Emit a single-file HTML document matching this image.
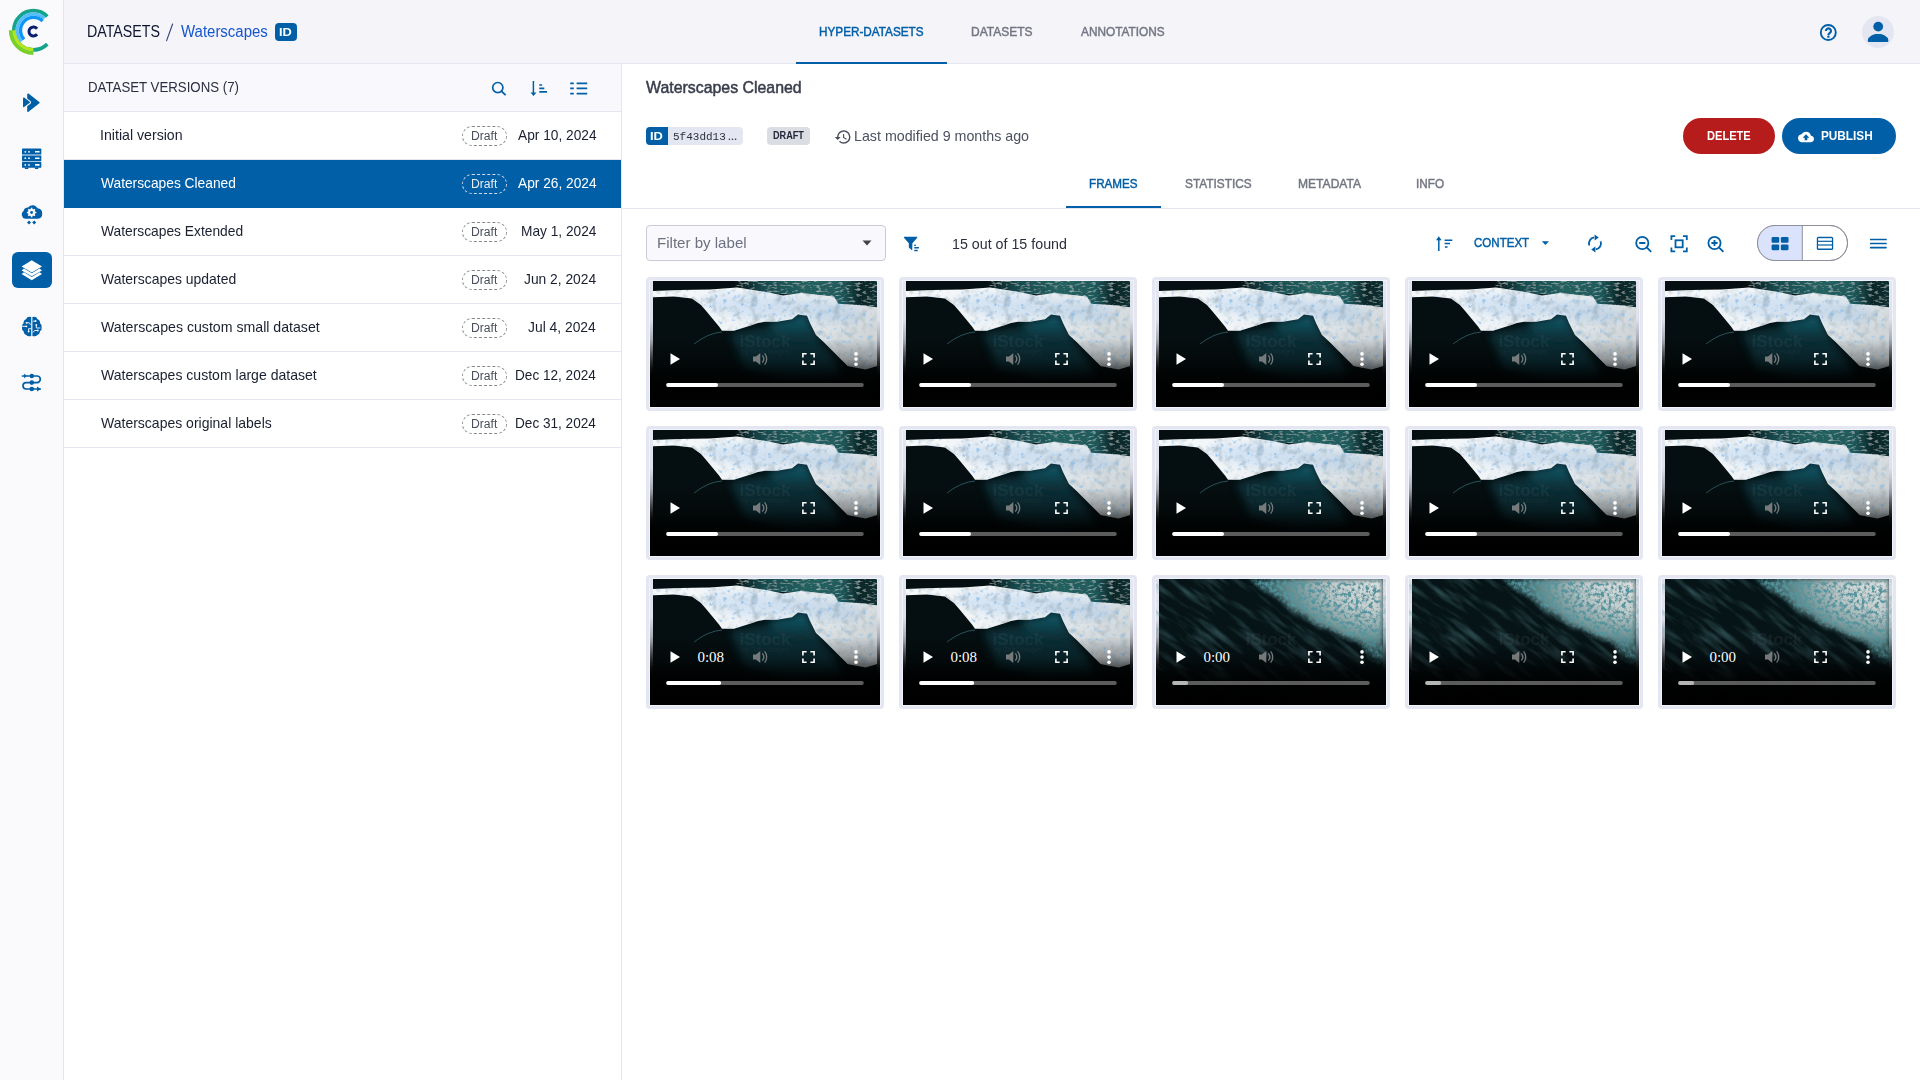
<!DOCTYPE html>
<html><head><meta charset="utf-8"><style>
*{box-sizing:border-box;margin:0;padding:0}
html,body{width:1920px;height:1080px;overflow:hidden;background:#fff;font-family:"Liberation Sans",sans-serif;color:#23273a}
.abs{position:absolute}
.t{position:absolute;white-space:nowrap}
#side{position:absolute;left:0;top:0;width:64px;height:1080px;background:#fafafd;border-right:1px solid #e3e6ef}
#hdr{position:absolute;left:64px;top:0;width:1856px;height:64px;background:#f4f4f9;border-bottom:1px solid #e3e6ef}
#left{position:absolute;left:64px;top:64px;width:558px;height:1016px;background:#fff;border-right:1px solid #e3e6ef}
#vh{position:absolute;left:64px;top:64px;width:557px;height:48px;background:#f9f9fd;border-bottom:1px solid #e3e6ef}
.row{position:absolute;left:64px;width:557px;height:48px;border-bottom:1px solid #e3e6ef}
.row.sel{background:#005fa7;border-bottom-color:#005fa7}
.draft{position:absolute;left:398px;top:14px;width:45px;height:20px;border:1px dashed #85888f;border-radius:10px}
.sel .draft{border-color:#d5dcea}
.card{position:absolute;width:238px;height:134px;background:#e4e7f1;border-radius:4px}
.vid{position:absolute;left:4px;top:4px;width:230px;height:126px;box-shadow:0 0 0 1px #f1f3fb}
.vid svg{position:absolute;left:0;top:0}
</style></head><body>
<svg width="0" height="0" style="position:absolute">
<defs>
<linearGradient id="ctl" x1="0" y1="0" x2="0" y2="1">
<stop offset="0" stop-color="#000" stop-opacity="0"/>
<stop offset="0.46" stop-color="#000" stop-opacity="0"/>
<stop offset="0.62" stop-color="#000" stop-opacity="0.3"/>
<stop offset="0.74" stop-color="#000" stop-opacity="0.75"/>
<stop offset="0.84" stop-color="#000" stop-opacity="0.97"/>
<stop offset="1" stop-color="#000" stop-opacity="1"/>
</linearGradient>
<linearGradient id="side" x1="0" y1="0" x2="0" y2="1">
<stop offset="0" stop-color="#e4e7f1"/>
<stop offset="0.3" stop-color="#dfe2eb"/>
<stop offset="0.5" stop-color="#9c9ea6"/>
<stop offset="0.7" stop-color="#202022"/>
<stop offset="0.8" stop-color="#000"/>
<stop offset="1" stop-color="#000"/>
</linearGradient>
<linearGradient id="foamg" x1="0" y1="0" x2="1" y2="0.5">
<stop offset="0" stop-color="#f8fafa"/>
<stop offset="0.45" stop-color="#f0f4f7"/>
<stop offset="0.75" stop-color="#e2e8eb"/>
<stop offset="1" stop-color="#d0d6d8"/>
</linearGradient>
<radialGradient id="deep" cx="0.5" cy="0.45" r="0.5">
<stop offset="0" stop-color="#0a2b32"/>
<stop offset="0.55" stop-color="#061c21"/>
<stop offset="1" stop-color="#030c0d"/>
</radialGradient>
<linearGradient id="topw" x1="0" y1="0" x2="1" y2="0">
<stop offset="0" stop-color="#061416"/>
<stop offset="0.2" stop-color="#174a4e"/>
<stop offset="0.5" stop-color="#22605f"/>
<stop offset="0.75" stop-color="#1f5a5c"/>
<stop offset="0.88" stop-color="#0a2729"/>
<stop offset="1" stop-color="#0e2f31"/>
</linearGradient>
<radialGradient id="w2g" cx="0.95" cy="0.05" r="1.1">
<stop offset="0" stop-color="#dfe3e2"/>
<stop offset="0.22" stop-color="#c3cccb"/>
<stop offset="0.38" stop-color="#4e8186"/>
<stop offset="0.55" stop-color="#123c43"/>
<stop offset="0.8" stop-color="#08191c"/>
<stop offset="1" stop-color="#040b0c"/>
</radialGradient>
<filter id="tex" x="0" y="0" width="100%" height="100%">
<feTurbulence type="fractalNoise" baseFrequency="0.22" numOctaves="3" seed="3" result="n"/>
<feColorMatrix in="n" type="matrix" values="0 0 0 0 0.26  0 0 0 0 0.54  0 0 0 0 0.84  0 0 0 -3.2 1.3" result="c"/>
<feComposite in="c" in2="SourceGraphic" operator="in" result="spots"/>
<feTurbulence type="fractalNoise" baseFrequency="0.12" numOctaves="2" seed="9" result="n2"/>
<feColorMatrix in="n2" type="matrix" values="0 0 0 0 0.42  0 0 0 0 0.50  0 0 0 0 0.54  0 0 0 2.4 -1.15" result="c2"/>
<feComposite in="c2" in2="SourceGraphic" operator="in" result="shade"/>
<feMerge><feMergeNode in="SourceGraphic"/><feMergeNode in="shade"/><feMergeNode in="spots"/></feMerge>
</filter>
<filter id="tex2" x="0" y="0" width="100%" height="100%">
<feTurbulence type="fractalNoise" baseFrequency="0.18 0.5" numOctaves="2" seed="7" result="n"/>
<feColorMatrix in="n" type="matrix" values="0 0 0 0 0.62  0 0 0 0 0.80  0 0 0 0 0.80  0 0 0 1.3 -0.68" result="c"/>
<feComposite in="c" in2="SourceGraphic" operator="in" result="spots"/>
<feMerge><feMergeNode in="SourceGraphic"/><feMergeNode in="spots"/></feMerge>
</filter>
<filter id="streak" x="0" y="0" width="100%" height="100%">
<feTurbulence type="fractalNoise" baseFrequency="0.025 0.14" numOctaves="3" seed="5" result="n"/>
<feColorMatrix in="n" type="matrix" values="0 0 0 0 0.10  0 0 0 0 0.26  0 0 0 0 0.29  0 0 0 1.1 -0.52" result="c"/>
<feComposite in="c" in2="SourceGraphic" operator="in"/>
</filter>
<filter id="bl1"><feGaussianBlur stdDeviation="4"/></filter>
<clipPath id="imgclip"><rect x="3" y="0" width="224" height="126"/></clipPath>
<linearGradient id="lipg" x1="0" y1="0" x2="0" y2="1">
<stop offset="0" stop-color="#176070"/>
<stop offset="1" stop-color="#07252b"/>
</linearGradient>
<symbol id="w1" viewBox="0 0 230 126">
<rect x="0" y="0" width="230" height="126" fill="url(#side)"/>
<g clip-path="url(#imgclip)">
<rect x="3" y="0" width="224" height="126" fill="#050e10"/>
<path d="M85 0 L227 0 L227 30 L190 24 L150 14 L110 12 L85 8Z" fill="url(#topw)" filter="url(#tex2)"/>
<path d="M80 52 L150 40 L165 52 L182 75 L192 96 L140 100 L95 88Z" fill="#0c3a45" opacity="0.75" filter="url(#bl1)"/>
<path d="M118 42 L142 38 L150 33 L158 36 L162 46 L168 58 L150 62 L128 56Z" fill="url(#lipg)" filter="url(#bl1)"/>
<path d="M3 10 L30 9 L60 8.4 L87 6.6 L115 10.8 L133 14.4 L151 12 L184 15.6 L188 22.8 L208 24 L227 26.3 L227 85 L215.6 88.5 L197.6 85 L185.6 73 L173.6 61 L166 54 L160 42 L157 34.7 L148 33.5 L142 38.3 L127 40.7 L115 40.7 L108 42 L96 46 L84 49.7 L72 49.7 L69 45.5 L63 38.3 L57 31 L51 24 L42 17.4 L24 15.6 L3 16.2Z" fill="url(#foamg)" filter="url(#tex)"/>
<path d="M50 16 L100 13 L140 17 L185 22 L215 30 L200 42 L165 40 L150 33 L120 36 L90 36 L62 28Z" fill="#2f7fd6" opacity="0.14" filter="url(#bl1)"/>
<path d="M44 63 Q58 52 72 51" stroke="#3e7f8a" stroke-width="1" fill="none" opacity="0.6"/>
<text x="115" y="66" text-anchor="middle" font-family="Liberation Sans" font-weight="700" font-size="17" fill="#9a9a9a" opacity="0.09">iStock</text><text x="115" y="73" text-anchor="middle" font-family="Liberation Sans" font-size="6.5" fill="#9a9a9a" opacity="0.1">by Getty Images</text>
</g>
<rect x="0" y="0" width="230" height="126" fill="url(#ctl)"/>
</symbol>
<radialGradient id="f2g" cx="1" cy="0" r="1">
<stop offset="0" stop-color="#e2e6e5"/>
<stop offset="0.4" stop-color="#c2cccc"/>
<stop offset="0.75" stop-color="#5d8587"/>
<stop offset="1" stop-color="#183f45"/>
</radialGradient>
<filter id="tex3" x="-10%" y="-10%" width="120%" height="120%">
<feGaussianBlur in="SourceGraphic" stdDeviation="2.5" result="b"/>
<feTurbulence type="fractalNoise" baseFrequency="0.28" numOctaves="3" seed="11" result="n"/>
<feColorMatrix in="n" type="matrix" values="0 0 0 0 0.09  0 0 0 0 0.30  0 0 0 0 0.34  0 0 0 -4 2.35" result="c"/>
<feComposite in="c" in2="b" operator="in" result="spots"/>
<feMerge><feMergeNode in="b"/><feMergeNode in="spots"/></feMerge>
</filter>
<symbol id="w2" viewBox="0 0 230 126">
<rect x="0" y="0" width="230" height="126" fill="url(#side)"/>
<g transform="translate(3,0)">
<rect x="0" y="0" width="224" height="126" fill="#061417"/>
<g transform="rotate(38 112 63)"><rect x="-60" y="-60" width="344" height="246" fill="#1b4f55" filter="url(#streak)"/></g>
<path d="M92 0 L224 0 L224 84 L212 78 L200 62 L186 58 L172 50 L158 46 L146 36 L132 30 L120 18 L104 10Z" fill="url(#f2g)" filter="url(#tex3)"/>
<text x="112" y="66" text-anchor="middle" font-family="Liberation Sans" font-weight="700" font-size="17" fill="#9a9a9a" opacity="0.09">iStock</text>
</g>
<rect x="0" y="0" width="230" height="126" fill="url(#ctl)"/>
</symbol>
</defs></svg>
<div id="side"></div>
<svg class="abs" width="64" height="64" viewBox="0 0 64 64" style="left:0;top:0">
<path d="M47.26 44.16A19.6 19.6 0 1 1 47.26 16.44" stroke="#14a38b" stroke-width="3.7" fill="none"/>
<path d="M21.55 41.35A16.2 16.2 0 0 1 44.45 18.45" stroke="#55bdfb" stroke-width="3.2" fill="none"/>
<path d="M24.05 39.33A13.0 13.0 0 0 1 42.59 21.11" stroke="#0d96f5" stroke-width="3.4" fill="none"/>
<path d="M33.40 49.80A19.5 19.5 0 0 1 13.90 30.30" stroke="#b5e51d" stroke-width="3.5" fill="none"/>
<path d="M33.40 53.20A22.9 22.9 0 0 1 10.50 30.30" stroke="#78d12a" stroke-width="3.4" fill="none"/>
<path d="M37.05 34.27A4.5 4.5 0 1 1 37.05 28.73" stroke="#0b1e6e" stroke-width="3" fill="none"/>
</svg>
<svg class="abs" style="left:0;top:0" width="64" height="420" viewBox="0 0 64 420">
<g fill="#005fa7" stroke-linejoin="round">
<path d="M28 94.2 L38.8 102.7 L28 111.2Z" stroke="#005fa7" stroke-width="1.6"/>
<path d="M23.7 98.1 L29.4 102.35 L23.7 106.6Z" stroke="#fafafd" stroke-width="3.4"/>
<path d="M23.7 98.1 L29.4 102.35 L23.7 106.6Z" stroke="#005fa7" stroke-width="1.3"/>
</g>
<g fill="#005fa7">
<rect x="22" y="148.6" width="19.3" height="5.4" rx="0.6"/>
<rect x="22" y="155.7" width="19.3" height="5.2" rx="0.6"/>
<rect x="22" y="162" width="19.3" height="5.8" rx="0.6"/>
<rect x="24.8" y="167.6" width="3.6" height="1.4" rx="0.6"/><rect x="34.8" y="167.6" width="3.6" height="1.4" rx="0.6"/>
<rect x="22" y="154" width="19.3" height="1.7" opacity="0.55"/>
<rect x="22" y="160.9" width="19.3" height="1.1" opacity="0.3"/>
</g>
<g fill="#fff"><circle cx="25.3" cy="151.8" r="0.9"/><circle cx="29" cy="151.8" r="0.9"/><rect x="35" y="151" width="4.6" height="1.6" rx="0.5"/>
<circle cx="25.3" cy="158.2" r="0.9"/><circle cx="29" cy="158.2" r="0.9"/><rect x="35" y="157.4" width="4.6" height="1.6" rx="0.5"/>
<circle cx="25.3" cy="164.9" r="0.9"/><circle cx="29" cy="164.9" r="0.9"/><rect x="35" y="164.1" width="4.6" height="1.6" rx="0.5"/></g>
<g fill="#005fa7">
<path d="M25.2 218.8 A4.4 4.4 0 0 1 23.7 210.8 A3.8 3.8 0 0 1 28.2 207.6 A5.4 5.4 0 0 1 37.5 208.3 A5.3 5.3 0 0 1 37.8 218.8 Z"/>
<path d="M29 220.4 L31 222.5 L29 224.6 L27 222.5Z M34.2 220.4 L36.2 222.5 L34.2 224.6 L32.2 222.5Z"/>
</g>
<g fill="#fafafd"><circle cx="31.6" cy="212.5" r="3.6"/></g>
<g stroke="#fafafd" stroke-width="1.6"><path d="M31.6 207.8v9.4M26.9 212.5h9.4M28.3 209.2l6.6 6.6M34.9 209.2l-6.6 6.6"/></g>
<circle cx="31.6" cy="212.5" r="1.4" fill="#005fa7"/>
<rect x="12" y="252" width="40" height="36" rx="6" fill="#005fa7"/>
<g fill="#fff">
<path d="M31.8 260.3 L42 266.6 L31.8 272.5 L21.6 266.6 Z"/>
<path d="M24 268.4 L31.8 273.2 L39.6 268.4 L42 270.4 L31.8 276.2 L21.6 270.4 Z"/>
<path d="M24 272.2 L31.8 277 L39.6 272.2 L42 274 L31.8 280.2 L21.6 274 Z"/>
</g>
<g fill="#005fa7">
<path d="M31.2 317 Q27 316 26.3 319 Q23.5 320 23.5 323.2 Q21.5 324.5 22 327.5 Q21.5 330 23.5 331 Q24 334.6 26.3 335 Q27.5 336.8 31.2 336 Z"/>
<path d="M32.4 317 Q36.6 316 37.3 319 Q40.1 320 40.1 323.2 Q42.1 324.5 41.6 327.5 Q42.1 330 40.1 331 Q39.6 334.6 37.3 335 Q36.1 336.8 32.4 336 Z"/>
</g>
<g stroke="#fafafd" stroke-width="0.9" fill="none"><path d="M21.5 326.3h4.5M26.5 322.8h2.8l1.3 2M28.6 331.5v-2.8h2.5M33 321.2h2.5M36.3 325v3h4M33 332.5l1.5-2h3.5"/></g>
<g fill="#fafafd"><circle cx="26.5" cy="322.8" r="0.9"/><circle cx="26.4" cy="326.3" r="0.9"/><circle cx="28.6" cy="331.5" r="0.9"/><circle cx="35.6" cy="321" r="0.9"/><circle cx="36.3" cy="325" r="0.9"/><circle cx="37.8" cy="330.5" r="0.9"/></g>
<g stroke="#005fa7" stroke-width="1.7" fill="none" stroke-linecap="round"><path d="M22.5 376h14.5a3.3 3.3 0 0 1 0 6.6h-10.8a3.2 3.2 0 0 0 0 6.4h14"/></g>
<g fill="#005fa7"><path d="M24.2 373.4l2.6 2.6-2.6 2.6M37 386.4l3.8 2.6-3.8 2.6"/><circle cx="31.8" cy="376" r="2.2"/><circle cx="31.8" cy="382.6" r="2.3"/><circle cx="31.8" cy="389" r="2.3"/></g>
</svg>
<div id="hdr"></div>
<svg class="abs" style="left:164px;top:20px" width="12" height="24" viewBox="164 20 12 24"><path d="M166.6 40.6 L172.6 24" stroke="#34467e" stroke-width="1.15" stroke-linecap="round"/></svg>
<div class="abs" style="left:275px;top:23px;width:22px;height:18px;background:#005fa7;border-radius:4px"></div>
<div class="abs" style="left:796px;top:62px;width:151px;height:2px;background:#005fa7"></div>
<svg class="abs" style="left:1804px;top:0" width="116" height="64" viewBox="1804 0 116 64">
<circle cx="1828.3" cy="32.5" r="7.5" stroke="#005fa7" stroke-width="1.9" fill="none"/>
<path d="M1825.9 30.9a2.55 2.45 0 1 1 4 2c-.9.6-1.5 1-1.5 2" stroke="#005fa7" stroke-width="2.1" fill="none"/>
<rect x="1827.3" y="35.6" width="2.2" height="2.1" rx="0.3" fill="#005fa7"/>
<circle cx="1878" cy="32" r="16" fill="#e4e7f1"/>
<circle cx="1878.2" cy="26.6" r="4.9" fill="#005fa7"/>
<path d="M1868.6 41.9 Q1867.6 41.9 1867.8 40.2 Q1868.4 37 1871.5 35.4 Q1874 34.1 1875.5 34 L1880.7 34 Q1882.2 34.1 1884.7 35.4 Q1887.8 37 1888.4 40.2 Q1888.6 41.9 1887.6 41.9Z" fill="#005fa7"/>
</svg>
<div id="left"></div>
<div id="vh"></div>
<svg class="abs" style="left:64px;top:64px" width="557" height="48" viewBox="64 64 557 48">
<circle cx="497.8" cy="87.6" r="5.1" stroke="#005fa7" stroke-width="1.7" fill="none"/>
<path d="M501.6 91.4l4 3.8" stroke="#005fa7" stroke-width="1.8"/>
<path d="M533.4 81v13" stroke="#005fa7" stroke-width="1.5"/>
<path d="M530.5 92.4h6l-3 3.6z" fill="#005fa7"/>
<path d="M539.3 85h2.8M539.3 88.4h5M539.3 91.9h7.7" stroke="#005fa7" stroke-width="1.6"/>
<path d="M570.2 83.4h3.6M576.6 83.4h10.6M570.2 88.4h3.6M576.6 88.4h10.6M570.2 93.6h3.6M576.6 93.6h10.6" stroke="#005fa7" stroke-width="1.7"/>
</svg>
<div class="row" style="top:112px"><div class="draft"></div></div><div class="row sel" style="top:160px"><div class="draft"></div></div><div class="row" style="top:208px"><div class="draft"></div></div><div class="row" style="top:256px"><div class="draft"></div></div><div class="row" style="top:304px"><div class="draft"></div></div><div class="row" style="top:352px"><div class="draft"></div></div><div class="row" style="top:400px"><div class="draft"></div></div>
<div class="abs" style="left:646px;top:127px;width:97px;height:18px;background:#e4e7f1;border-radius:4px;overflow:hidden"><div class="abs" style="left:0;top:0;width:22px;height:18px;background:#005fa7"></div></div>
<div class="abs" style="left:767px;top:127px;width:43px;height:18px;background:#dcdde3;border-radius:4px"></div>
<svg class="abs" style="left:834px;top:128px" width="18" height="18" viewBox="0 0 24 24"><path fill="#4a4e5c" d="M13 3a9 9 0 0 0-9 9H1l3.89 3.89.07.14L9 12H6c0-3.870 3.13-7 7-7s7 3.13 7 7-3.13 7-7 7c-1.93 0-3.68-.79-4.94-2.06l-1.42 1.42A8.950 8.950 0 0 0 13 21a9 9 0 0 0 0-18zm-1 5v5l4.280 2.540.72-1.210-3.5-2.080V8H12z"/></svg>
<div class="abs" style="left:1683px;top:118px;width:92px;height:36px;background:#b71c1c;border-radius:18px"></div>
<div class="abs" style="left:1782px;top:118px;width:114px;height:36px;background:#005fa7;border-radius:18px"></div>
<svg class="abs" style="left:1797.5px;top:128.5px" width="16" height="16" viewBox="0 0 24 24"><path fill="#fff" d="M19.35 10.04A7.49 7.49 0 0 0 12 4C9.11 4 6.6 5.64 5.35 8.04A5.994 5.994 0 0 0 0 14c0 3.31 2.69 6 6 6h13c2.76 0 5-2.24 5-5 0-2.64-2.05-4.78-4.65-4.96zM14 13v4h-4v-4H7l5-5 5 5h-3z"/></svg>
<div class="abs" style="left:1066px;top:206px;width:95px;height:2px;background:#005fa7"></div>
<div class="abs" style="left:622px;top:208px;width:1298px;height:1px;background:#e3e6ef"></div>
<div class="abs" style="left:646px;top:225px;width:240px;height:36px;border:1px solid #c9cbd4;border-radius:4px;background:#f9f9fd"></div>
<svg class="abs" style="left:862px;top:240px" width="10" height="6"><path d="M0.5 0.5h9l-4.5 5z" fill="#444"/></svg>
<svg class="abs" style="left:900px;top:232px" width="24" height="22" viewBox="900 232 24 22"><path d="M904.4 236.8 L916.8 236.8 Q917.8 236.9 917.2 237.8 L912.4 243.3 L912.2 250.4 L908.8 247.4 L908.8 243.3 L904 237.8 Q903.5 236.9 904.4 236.8Z" fill="#005fa7"/><rect x="914.2" y="244.6" width="1.7" height="1.5" rx="0.6" fill="#005fa7"/><rect x="914.2" y="247.1" width="4.9" height="1.5" rx="0.6" fill="#005fa7"/><rect x="914.2" y="249.8" width="3.6" height="1.5" rx="0.6" fill="#005fa7"/></svg>
<svg class="abs" style="left:1432px;top:224px" width="488" height="40" viewBox="1432 224 488 40">
<path d="M1438.8 251v-12.5" stroke="#005fa7" stroke-width="1.5" fill="none"/><path d="M1436 240.2l2.8-3.9 2.8 3.9z" fill="#005fa7"/>
<path d="M1444.6 240.3h7.7M1444.6 243.6h5.4M1444.9 247h2.6" stroke="#005fa7" stroke-width="1.5"/>
<path d="M1541.8 241.2h7.2l-3.6 3.8z" fill="#005fa7"/>
<g stroke="#005fa7" stroke-width="1.8" fill="none">
<path d="M1589.36 245.45A6 6 0 0 1 1594.16 237.46 M1600.64 241.35A6 6 0 0 1 1595.84 249.34"/>
<circle cx="1642.3" cy="243" r="6.1"/><path d="M1646.7 247.4l4.5 4.5M1639.2 243h6.2"/>
<path d="M1671.4 240v-3.8h3.8M1683 236.2h3.8v3.8M1686.8 247.5v3.8h-3.8M1675.2 251.3h-3.8v-3.8"/><rect x="1675.5" y="240.3" width="7.2" height="7"/>
<circle cx="1714.5" cy="243" r="6.1"/><path d="M1718.9 247.4l4.5 4.5M1711.4 243h6.2M1714.5 239.9v6.2"/>
</g>
<path d="M1594.6 234.4L1598.8 237.4L1594.6 240.4zM1595.4 246.4L1591.2 249.4L1595.4 252.4z" fill="#005fa7"/>
<rect x="1757.5" y="225.5" width="90" height="35" rx="17.5" fill="#fff" stroke="#8e919a" stroke-width="1"/>
<path d="M1775 225.5h27.3v35H1775a17.5 17.5 0 0 1 0-35z" fill="#dae3fb"/>
<rect x="1757.5" y="225.5" width="90" height="35" rx="17.5" fill="none" stroke="#8e919a" stroke-width="1"/>
<path d="M1802.3 225.5v35" stroke="#8e919a" stroke-width="1"/>
<g fill="#005fa7"><rect x="1771.6" y="237" width="7.6" height="5.8" rx="1.3"/><rect x="1780.9" y="237" width="7.6" height="5.8" rx="1.3"/><rect x="1771.6" y="244.4" width="7.6" height="5.8" rx="1.3"/><rect x="1780.9" y="244.4" width="7.6" height="5.8" rx="1.3"/></g>
<rect x="1816.8" y="236.8" width="16.4" height="13.3" rx="1.6" fill="#005fa7"/>
<rect x="1818.1" y="238.2" width="13.8" height="2.5" fill="#fff"/><rect x="1818.1" y="241.9" width="13.8" height="2.5" fill="#fff"/><rect x="1818.1" y="245.6" width="13.8" height="2.9" fill="#fff"/>
<path d="M1870.7 239.5h15.3M1870.7 243.5h15.3M1870.7 247.6h15.3" stroke="#005fa7" stroke-width="1.7" stroke-linecap="round"/>
</svg>
<div class="card" style="left:646px;top:277px"><div class="vid"><svg width="230" height="126"><use href="#w1"/></svg><svg class="ctl" width="230" height="126" viewBox="0 0 230 126">
<path d="M20.5 72.2 L30 78 L20.5 83.8Z" fill="#fff"/>
<g fill="#8a8a8a" opacity="0.85"><path d="M103 75.5h3l4.3-3.6v12.2l-4.3-3.6h-3z"/><path d="M112.3 74.4a5.5 5.5 0 0 1 0 7.2" stroke="#8a8a8a" stroke-width="1.3" fill="none"/><path d="M114.6 72.4a8.5 8.5 0 0 1 0 11.2" stroke="#8a8a8a" stroke-width="1.3" fill="none"/></g>
<g fill="none" stroke="#fff" stroke-width="1.6"><path d="M152.9 76.5v-3.7h3.7M160.4 72.8h3.7v3.7M164.1 79.5v3.7h-3.7M156.6 83.2h-3.7v-3.7"/></g>
<g fill="#fff"><circle cx="206" cy="72.9" r="1.8"/><circle cx="206" cy="78.1" r="1.8"/><circle cx="206" cy="83.3" r="1.8"/></g>
<rect x="16.2" y="102" width="197.6" height="4" rx="2" fill="#5c5c5c"/>
<rect x="16.2" y="102" width="51.8" height="4" rx="2" fill="#fff"/>
</svg></div></div><div class="card" style="left:899px;top:277px"><div class="vid"><svg width="230" height="126"><use href="#w1"/></svg><svg class="ctl" width="230" height="126" viewBox="0 0 230 126">
<path d="M20.5 72.2 L30 78 L20.5 83.8Z" fill="#fff"/>
<g fill="#8a8a8a" opacity="0.85"><path d="M103 75.5h3l4.3-3.6v12.2l-4.3-3.6h-3z"/><path d="M112.3 74.4a5.5 5.5 0 0 1 0 7.2" stroke="#8a8a8a" stroke-width="1.3" fill="none"/><path d="M114.6 72.4a8.5 8.5 0 0 1 0 11.2" stroke="#8a8a8a" stroke-width="1.3" fill="none"/></g>
<g fill="none" stroke="#fff" stroke-width="1.6"><path d="M152.9 76.5v-3.7h3.7M160.4 72.8h3.7v3.7M164.1 79.5v3.7h-3.7M156.6 83.2h-3.7v-3.7"/></g>
<g fill="#fff"><circle cx="206" cy="72.9" r="1.8"/><circle cx="206" cy="78.1" r="1.8"/><circle cx="206" cy="83.3" r="1.8"/></g>
<rect x="16.2" y="102" width="197.6" height="4" rx="2" fill="#5c5c5c"/>
<rect x="16.2" y="102" width="51.8" height="4" rx="2" fill="#fff"/>
</svg></div></div><div class="card" style="left:1152px;top:277px"><div class="vid"><svg width="230" height="126"><use href="#w1"/></svg><svg class="ctl" width="230" height="126" viewBox="0 0 230 126">
<path d="M20.5 72.2 L30 78 L20.5 83.8Z" fill="#fff"/>
<g fill="#8a8a8a" opacity="0.85"><path d="M103 75.5h3l4.3-3.6v12.2l-4.3-3.6h-3z"/><path d="M112.3 74.4a5.5 5.5 0 0 1 0 7.2" stroke="#8a8a8a" stroke-width="1.3" fill="none"/><path d="M114.6 72.4a8.5 8.5 0 0 1 0 11.2" stroke="#8a8a8a" stroke-width="1.3" fill="none"/></g>
<g fill="none" stroke="#fff" stroke-width="1.6"><path d="M152.9 76.5v-3.7h3.7M160.4 72.8h3.7v3.7M164.1 79.5v3.7h-3.7M156.6 83.2h-3.7v-3.7"/></g>
<g fill="#fff"><circle cx="206" cy="72.9" r="1.8"/><circle cx="206" cy="78.1" r="1.8"/><circle cx="206" cy="83.3" r="1.8"/></g>
<rect x="16.2" y="102" width="197.6" height="4" rx="2" fill="#5c5c5c"/>
<rect x="16.2" y="102" width="51.8" height="4" rx="2" fill="#fff"/>
</svg></div></div><div class="card" style="left:1405px;top:277px"><div class="vid"><svg width="230" height="126"><use href="#w1"/></svg><svg class="ctl" width="230" height="126" viewBox="0 0 230 126">
<path d="M20.5 72.2 L30 78 L20.5 83.8Z" fill="#fff"/>
<g fill="#8a8a8a" opacity="0.85"><path d="M103 75.5h3l4.3-3.6v12.2l-4.3-3.6h-3z"/><path d="M112.3 74.4a5.5 5.5 0 0 1 0 7.2" stroke="#8a8a8a" stroke-width="1.3" fill="none"/><path d="M114.6 72.4a8.5 8.5 0 0 1 0 11.2" stroke="#8a8a8a" stroke-width="1.3" fill="none"/></g>
<g fill="none" stroke="#fff" stroke-width="1.6"><path d="M152.9 76.5v-3.7h3.7M160.4 72.8h3.7v3.7M164.1 79.5v3.7h-3.7M156.6 83.2h-3.7v-3.7"/></g>
<g fill="#fff"><circle cx="206" cy="72.9" r="1.8"/><circle cx="206" cy="78.1" r="1.8"/><circle cx="206" cy="83.3" r="1.8"/></g>
<rect x="16.2" y="102" width="197.6" height="4" rx="2" fill="#5c5c5c"/>
<rect x="16.2" y="102" width="51.8" height="4" rx="2" fill="#fff"/>
</svg></div></div><div class="card" style="left:1658px;top:277px"><div class="vid"><svg width="230" height="126"><use href="#w1"/></svg><svg class="ctl" width="230" height="126" viewBox="0 0 230 126">
<path d="M20.5 72.2 L30 78 L20.5 83.8Z" fill="#fff"/>
<g fill="#8a8a8a" opacity="0.85"><path d="M103 75.5h3l4.3-3.6v12.2l-4.3-3.6h-3z"/><path d="M112.3 74.4a5.5 5.5 0 0 1 0 7.2" stroke="#8a8a8a" stroke-width="1.3" fill="none"/><path d="M114.6 72.4a8.5 8.5 0 0 1 0 11.2" stroke="#8a8a8a" stroke-width="1.3" fill="none"/></g>
<g fill="none" stroke="#fff" stroke-width="1.6"><path d="M152.9 76.5v-3.7h3.7M160.4 72.8h3.7v3.7M164.1 79.5v3.7h-3.7M156.6 83.2h-3.7v-3.7"/></g>
<g fill="#fff"><circle cx="206" cy="72.9" r="1.8"/><circle cx="206" cy="78.1" r="1.8"/><circle cx="206" cy="83.3" r="1.8"/></g>
<rect x="16.2" y="102" width="197.6" height="4" rx="2" fill="#5c5c5c"/>
<rect x="16.2" y="102" width="51.8" height="4" rx="2" fill="#fff"/>
</svg></div></div><div class="card" style="left:646px;top:426px"><div class="vid"><svg width="230" height="126"><use href="#w1"/></svg><svg class="ctl" width="230" height="126" viewBox="0 0 230 126">
<path d="M20.5 72.2 L30 78 L20.5 83.8Z" fill="#fff"/>
<g fill="#8a8a8a" opacity="0.85"><path d="M103 75.5h3l4.3-3.6v12.2l-4.3-3.6h-3z"/><path d="M112.3 74.4a5.5 5.5 0 0 1 0 7.2" stroke="#8a8a8a" stroke-width="1.3" fill="none"/><path d="M114.6 72.4a8.5 8.5 0 0 1 0 11.2" stroke="#8a8a8a" stroke-width="1.3" fill="none"/></g>
<g fill="none" stroke="#fff" stroke-width="1.6"><path d="M152.9 76.5v-3.7h3.7M160.4 72.8h3.7v3.7M164.1 79.5v3.7h-3.7M156.6 83.2h-3.7v-3.7"/></g>
<g fill="#fff"><circle cx="206" cy="72.9" r="1.8"/><circle cx="206" cy="78.1" r="1.8"/><circle cx="206" cy="83.3" r="1.8"/></g>
<rect x="16.2" y="102" width="197.6" height="4" rx="2" fill="#5c5c5c"/>
<rect x="16.2" y="102" width="51.8" height="4" rx="2" fill="#fff"/>
</svg></div></div><div class="card" style="left:899px;top:426px"><div class="vid"><svg width="230" height="126"><use href="#w1"/></svg><svg class="ctl" width="230" height="126" viewBox="0 0 230 126">
<path d="M20.5 72.2 L30 78 L20.5 83.8Z" fill="#fff"/>
<g fill="#8a8a8a" opacity="0.85"><path d="M103 75.5h3l4.3-3.6v12.2l-4.3-3.6h-3z"/><path d="M112.3 74.4a5.5 5.5 0 0 1 0 7.2" stroke="#8a8a8a" stroke-width="1.3" fill="none"/><path d="M114.6 72.4a8.5 8.5 0 0 1 0 11.2" stroke="#8a8a8a" stroke-width="1.3" fill="none"/></g>
<g fill="none" stroke="#fff" stroke-width="1.6"><path d="M152.9 76.5v-3.7h3.7M160.4 72.8h3.7v3.7M164.1 79.5v3.7h-3.7M156.6 83.2h-3.7v-3.7"/></g>
<g fill="#fff"><circle cx="206" cy="72.9" r="1.8"/><circle cx="206" cy="78.1" r="1.8"/><circle cx="206" cy="83.3" r="1.8"/></g>
<rect x="16.2" y="102" width="197.6" height="4" rx="2" fill="#5c5c5c"/>
<rect x="16.2" y="102" width="51.8" height="4" rx="2" fill="#fff"/>
</svg></div></div><div class="card" style="left:1152px;top:426px"><div class="vid"><svg width="230" height="126"><use href="#w1"/></svg><svg class="ctl" width="230" height="126" viewBox="0 0 230 126">
<path d="M20.5 72.2 L30 78 L20.5 83.8Z" fill="#fff"/>
<g fill="#8a8a8a" opacity="0.85"><path d="M103 75.5h3l4.3-3.6v12.2l-4.3-3.6h-3z"/><path d="M112.3 74.4a5.5 5.5 0 0 1 0 7.2" stroke="#8a8a8a" stroke-width="1.3" fill="none"/><path d="M114.6 72.4a8.5 8.5 0 0 1 0 11.2" stroke="#8a8a8a" stroke-width="1.3" fill="none"/></g>
<g fill="none" stroke="#fff" stroke-width="1.6"><path d="M152.9 76.5v-3.7h3.7M160.4 72.8h3.7v3.7M164.1 79.5v3.7h-3.7M156.6 83.2h-3.7v-3.7"/></g>
<g fill="#fff"><circle cx="206" cy="72.9" r="1.8"/><circle cx="206" cy="78.1" r="1.8"/><circle cx="206" cy="83.3" r="1.8"/></g>
<rect x="16.2" y="102" width="197.6" height="4" rx="2" fill="#5c5c5c"/>
<rect x="16.2" y="102" width="51.8" height="4" rx="2" fill="#fff"/>
</svg></div></div><div class="card" style="left:1405px;top:426px"><div class="vid"><svg width="230" height="126"><use href="#w1"/></svg><svg class="ctl" width="230" height="126" viewBox="0 0 230 126">
<path d="M20.5 72.2 L30 78 L20.5 83.8Z" fill="#fff"/>
<g fill="#8a8a8a" opacity="0.85"><path d="M103 75.5h3l4.3-3.6v12.2l-4.3-3.6h-3z"/><path d="M112.3 74.4a5.5 5.5 0 0 1 0 7.2" stroke="#8a8a8a" stroke-width="1.3" fill="none"/><path d="M114.6 72.4a8.5 8.5 0 0 1 0 11.2" stroke="#8a8a8a" stroke-width="1.3" fill="none"/></g>
<g fill="none" stroke="#fff" stroke-width="1.6"><path d="M152.9 76.5v-3.7h3.7M160.4 72.8h3.7v3.7M164.1 79.5v3.7h-3.7M156.6 83.2h-3.7v-3.7"/></g>
<g fill="#fff"><circle cx="206" cy="72.9" r="1.8"/><circle cx="206" cy="78.1" r="1.8"/><circle cx="206" cy="83.3" r="1.8"/></g>
<rect x="16.2" y="102" width="197.6" height="4" rx="2" fill="#5c5c5c"/>
<rect x="16.2" y="102" width="51.8" height="4" rx="2" fill="#fff"/>
</svg></div></div><div class="card" style="left:1658px;top:426px"><div class="vid"><svg width="230" height="126"><use href="#w1"/></svg><svg class="ctl" width="230" height="126" viewBox="0 0 230 126">
<path d="M20.5 72.2 L30 78 L20.5 83.8Z" fill="#fff"/>
<g fill="#8a8a8a" opacity="0.85"><path d="M103 75.5h3l4.3-3.6v12.2l-4.3-3.6h-3z"/><path d="M112.3 74.4a5.5 5.5 0 0 1 0 7.2" stroke="#8a8a8a" stroke-width="1.3" fill="none"/><path d="M114.6 72.4a8.5 8.5 0 0 1 0 11.2" stroke="#8a8a8a" stroke-width="1.3" fill="none"/></g>
<g fill="none" stroke="#fff" stroke-width="1.6"><path d="M152.9 76.5v-3.7h3.7M160.4 72.8h3.7v3.7M164.1 79.5v3.7h-3.7M156.6 83.2h-3.7v-3.7"/></g>
<g fill="#fff"><circle cx="206" cy="72.9" r="1.8"/><circle cx="206" cy="78.1" r="1.8"/><circle cx="206" cy="83.3" r="1.8"/></g>
<rect x="16.2" y="102" width="197.6" height="4" rx="2" fill="#5c5c5c"/>
<rect x="16.2" y="102" width="51.8" height="4" rx="2" fill="#fff"/>
</svg></div></div><div class="card" style="left:646px;top:575px"><div class="vid"><svg width="230" height="126"><use href="#w1"/></svg><svg class="ctl" width="230" height="126" viewBox="0 0 230 126">
<path d="M20.5 72.2 L30 78 L20.5 83.8Z" fill="#fff"/>
<g fill="#8a8a8a" opacity="0.85"><path d="M103 75.5h3l4.3-3.6v12.2l-4.3-3.6h-3z"/><path d="M112.3 74.4a5.5 5.5 0 0 1 0 7.2" stroke="#8a8a8a" stroke-width="1.3" fill="none"/><path d="M114.6 72.4a8.5 8.5 0 0 1 0 11.2" stroke="#8a8a8a" stroke-width="1.3" fill="none"/></g>
<g fill="none" stroke="#fff" stroke-width="1.6"><path d="M152.9 76.5v-3.7h3.7M160.4 72.8h3.7v3.7M164.1 79.5v3.7h-3.7M156.6 83.2h-3.7v-3.7"/></g>
<g fill="#fff"><circle cx="206" cy="72.9" r="1.8"/><circle cx="206" cy="78.1" r="1.8"/><circle cx="206" cy="83.3" r="1.8"/></g>
<rect x="16.2" y="102" width="197.6" height="4" rx="2" fill="#5c5c5c"/>
<rect x="16.2" y="102" width="55" height="4" rx="2" fill="#fff"/>
</svg></div></div><div class="t" style="left:697.45px;top:649px;font-size:15px;line-height:16px;color:#fff;font-family:'Liberation Serif',serif;text-shadow:0 0 1px #000;">0:08</div><div class="card" style="left:899px;top:575px"><div class="vid"><svg width="230" height="126"><use href="#w1"/></svg><svg class="ctl" width="230" height="126" viewBox="0 0 230 126">
<path d="M20.5 72.2 L30 78 L20.5 83.8Z" fill="#fff"/>
<g fill="#8a8a8a" opacity="0.85"><path d="M103 75.5h3l4.3-3.6v12.2l-4.3-3.6h-3z"/><path d="M112.3 74.4a5.5 5.5 0 0 1 0 7.2" stroke="#8a8a8a" stroke-width="1.3" fill="none"/><path d="M114.6 72.4a8.5 8.5 0 0 1 0 11.2" stroke="#8a8a8a" stroke-width="1.3" fill="none"/></g>
<g fill="none" stroke="#fff" stroke-width="1.6"><path d="M152.9 76.5v-3.7h3.7M160.4 72.8h3.7v3.7M164.1 79.5v3.7h-3.7M156.6 83.2h-3.7v-3.7"/></g>
<g fill="#fff"><circle cx="206" cy="72.9" r="1.8"/><circle cx="206" cy="78.1" r="1.8"/><circle cx="206" cy="83.3" r="1.8"/></g>
<rect x="16.2" y="102" width="197.6" height="4" rx="2" fill="#5c5c5c"/>
<rect x="16.2" y="102" width="55" height="4" rx="2" fill="#fff"/>
</svg></div></div><div class="t" style="left:950.45px;top:649px;font-size:15px;line-height:16px;color:#fff;font-family:'Liberation Serif',serif;text-shadow:0 0 1px #000;">0:08</div><div class="card" style="left:1152px;top:575px"><div class="vid"><svg width="230" height="126"><use href="#w2"/></svg><svg class="ctl" width="230" height="126" viewBox="0 0 230 126">
<path d="M20.5 72.2 L30 78 L20.5 83.8Z" fill="#fff"/>
<g fill="#8a8a8a" opacity="0.85"><path d="M103 75.5h3l4.3-3.6v12.2l-4.3-3.6h-3z"/><path d="M112.3 74.4a5.5 5.5 0 0 1 0 7.2" stroke="#8a8a8a" stroke-width="1.3" fill="none"/><path d="M114.6 72.4a8.5 8.5 0 0 1 0 11.2" stroke="#8a8a8a" stroke-width="1.3" fill="none"/></g>
<g fill="none" stroke="#fff" stroke-width="1.6"><path d="M152.9 76.5v-3.7h3.7M160.4 72.8h3.7v3.7M164.1 79.5v3.7h-3.7M156.6 83.2h-3.7v-3.7"/></g>
<g fill="#fff"><circle cx="206" cy="72.9" r="1.8"/><circle cx="206" cy="78.1" r="1.8"/><circle cx="206" cy="83.3" r="1.8"/></g>
<rect x="16.2" y="102" width="197.6" height="4" rx="2" fill="#5c5c5c"/>
<rect x="16.2" y="102" width="16" height="4" rx="2" fill="#b5b5b5"/>
</svg></div></div><div class="t" style="left:1203.45px;top:649px;font-size:15px;line-height:16px;color:#fff;font-family:'Liberation Serif',serif;text-shadow:0 0 1px #000;">0:00</div><div class="card" style="left:1405px;top:575px"><div class="vid"><svg width="230" height="126"><use href="#w2"/></svg><svg class="ctl" width="230" height="126" viewBox="0 0 230 126">
<path d="M20.5 72.2 L30 78 L20.5 83.8Z" fill="#fff"/>
<g fill="#8a8a8a" opacity="0.85"><path d="M103 75.5h3l4.3-3.6v12.2l-4.3-3.6h-3z"/><path d="M112.3 74.4a5.5 5.5 0 0 1 0 7.2" stroke="#8a8a8a" stroke-width="1.3" fill="none"/><path d="M114.6 72.4a8.5 8.5 0 0 1 0 11.2" stroke="#8a8a8a" stroke-width="1.3" fill="none"/></g>
<g fill="none" stroke="#fff" stroke-width="1.6"><path d="M152.9 76.5v-3.7h3.7M160.4 72.8h3.7v3.7M164.1 79.5v3.7h-3.7M156.6 83.2h-3.7v-3.7"/></g>
<g fill="#fff"><circle cx="206" cy="72.9" r="1.8"/><circle cx="206" cy="78.1" r="1.8"/><circle cx="206" cy="83.3" r="1.8"/></g>
<rect x="16.2" y="102" width="197.6" height="4" rx="2" fill="#5c5c5c"/>
<rect x="16.2" y="102" width="16" height="4" rx="2" fill="#b5b5b5"/>
</svg></div></div><div class="card" style="left:1658px;top:575px"><div class="vid"><svg width="230" height="126"><use href="#w2"/></svg><svg class="ctl" width="230" height="126" viewBox="0 0 230 126">
<path d="M20.5 72.2 L30 78 L20.5 83.8Z" fill="#fff"/>
<g fill="#8a8a8a" opacity="0.85"><path d="M103 75.5h3l4.3-3.6v12.2l-4.3-3.6h-3z"/><path d="M112.3 74.4a5.5 5.5 0 0 1 0 7.2" stroke="#8a8a8a" stroke-width="1.3" fill="none"/><path d="M114.6 72.4a8.5 8.5 0 0 1 0 11.2" stroke="#8a8a8a" stroke-width="1.3" fill="none"/></g>
<g fill="none" stroke="#fff" stroke-width="1.6"><path d="M152.9 76.5v-3.7h3.7M160.4 72.8h3.7v3.7M164.1 79.5v3.7h-3.7M156.6 83.2h-3.7v-3.7"/></g>
<g fill="#fff"><circle cx="206" cy="72.9" r="1.8"/><circle cx="206" cy="78.1" r="1.8"/><circle cx="206" cy="83.3" r="1.8"/></g>
<rect x="16.2" y="102" width="197.6" height="4" rx="2" fill="#5c5c5c"/>
<rect x="16.2" y="102" width="16" height="4" rx="2" fill="#b5b5b5"/>
</svg></div></div><div class="t" style="left:1709.45px;top:649px;font-size:15px;line-height:16px;color:#fff;font-family:'Liberation Serif',serif;text-shadow:0 0 1px #000;">0:00</div>
<div class="t" style="left:87.24px;top:23px;font-size:16px;line-height:17px;color:#0f1430;transform:scaleX(0.8894);transform-origin:0 0;">DATASETS</div><div class="t" style="left:180.55px;top:23px;font-size:16px;line-height:17px;color:#1556cf;transform:scaleX(0.9354);transform-origin:0 0;">Waterscapes</div><div class="t" style="left:819.15px;top:25px;font-size:12.4px;line-height:14px;color:#005fa7;transform:scaleX(0.9472);transform-origin:0 0;-webkit-text-stroke:0.45px #005fa7;">HYPER-DATASETS</div><div class="t" style="left:970.53px;top:25px;font-size:12.4px;line-height:14px;color:#737682;transform:scaleX(0.9678);transform-origin:0 0;-webkit-text-stroke:0.45px #737682;">DATASETS</div><div class="t" style="left:1080.50px;top:25px;font-size:12.4px;line-height:14px;color:#737682;transform:scaleX(0.9541);transform-origin:0 0;-webkit-text-stroke:0.45px #737682;">ANNOTATIONS</div><div class="t" style="left:87.56px;top:79px;font-size:14.6px;line-height:16px;color:#2a2e3f;transform:scaleX(0.9081);transform-origin:0 0;">DATASET VERSIONS (7)</div><div class="t" style="left:99.73px;top:127px;font-size:14.5px;line-height:16px;color:#1b1f30;transform:scaleX(0.9763);transform-origin:0 0;">Initial version</div><div class="t" style="left:517.65px;top:127px;font-size:14.5px;line-height:16px;color:#1b1f30;transform:scaleX(0.9461);transform-origin:0 0;">Apr 10, 2024</div><div class="t" style="left:471.03px;top:129px;font-size:12.5px;line-height:14px;color:#4b4f5c;transform:scaleX(0.9731);transform-origin:0 0;">Draft</div><div class="t" style="left:100.95px;top:175px;font-size:14.5px;line-height:16px;color:#ffffff;transform:scaleX(0.9490);transform-origin:0 0;">Waterscapes Cleaned</div><div class="t" style="left:517.65px;top:175px;font-size:14.5px;line-height:16px;color:#ffffff;transform:scaleX(0.9461);transform-origin:0 0;">Apr 26, 2024</div><div class="t" style="left:471.03px;top:177px;font-size:12.5px;line-height:14px;color:#e8edf5;transform:scaleX(0.9731);transform-origin:0 0;">Draft</div><div class="t" style="left:100.95px;top:223px;font-size:14.5px;line-height:16px;color:#1b1f30;transform:scaleX(0.9511);transform-origin:0 0;">Waterscapes Extended</div><div class="t" style="left:520.76px;top:223px;font-size:14.5px;line-height:16px;color:#1b1f30;transform:scaleX(0.9450);transform-origin:0 0;">May 1, 2024</div><div class="t" style="left:471.03px;top:225px;font-size:12.5px;line-height:14px;color:#4b4f5c;transform:scaleX(0.9731);transform-origin:0 0;">Draft</div><div class="t" style="left:100.95px;top:271px;font-size:14.5px;line-height:16px;color:#1b1f30;transform:scaleX(0.9624);transform-origin:0 0;">Waterscapes updated</div><div class="t" style="left:524.06px;top:271px;font-size:14.5px;line-height:16px;color:#1b1f30;transform:scaleX(0.9521);transform-origin:0 0;">Jun 2, 2024</div><div class="t" style="left:471.03px;top:273px;font-size:12.5px;line-height:14px;color:#4b4f5c;transform:scaleX(0.9731);transform-origin:0 0;">Draft</div><div class="t" style="left:100.95px;top:319px;font-size:14.5px;line-height:16px;color:#1b1f30;transform:scaleX(0.9752);transform-origin:0 0;">Waterscapes custom small dataset</div><div class="t" style="left:528.41px;top:319px;font-size:14.5px;line-height:16px;color:#1b1f30;transform:scaleX(0.9552);transform-origin:0 0;">Jul 4, 2024</div><div class="t" style="left:471.03px;top:321px;font-size:12.5px;line-height:14px;color:#4b4f5c;transform:scaleX(0.9731);transform-origin:0 0;">Draft</div><div class="t" style="left:100.95px;top:367px;font-size:14.5px;line-height:16px;color:#1b1f30;transform:scaleX(0.9686);transform-origin:0 0;">Waterscapes custom large dataset</div><div class="t" style="left:515.32px;top:367px;font-size:14.5px;line-height:16px;color:#1b1f30;transform:scaleX(0.9374);transform-origin:0 0;">Dec 12, 2024</div><div class="t" style="left:471.03px;top:369px;font-size:12.5px;line-height:14px;color:#4b4f5c;transform:scaleX(0.9731);transform-origin:0 0;">Draft</div><div class="t" style="left:100.95px;top:415px;font-size:14.5px;line-height:16px;color:#1b1f30;transform:scaleX(0.9659);transform-origin:0 0;">Waterscapes original labels</div><div class="t" style="left:515.32px;top:415px;font-size:14.5px;line-height:16px;color:#1b1f30;transform:scaleX(0.9374);transform-origin:0 0;">Dec 31, 2024</div><div class="t" style="left:471.03px;top:417px;font-size:12.5px;line-height:14px;color:#4b4f5c;transform:scaleX(0.9731);transform-origin:0 0;">Draft</div><div class="t" style="left:645.95px;top:78px;font-size:16.6px;line-height:19px;color:#383d4c;transform:scaleX(0.9573);transform-origin:0 0;-webkit-text-stroke:0.5px #383d4c;">Waterscapes Cleaned</div><div class="t" style="left:854.48px;top:128px;font-size:14.6px;line-height:16px;color:#4d5160;transform:scaleX(0.9761);transform-origin:0 0;">Last modified 9 months ago</div><div class="t" style="left:1706.78px;top:129px;font-size:12.4px;line-height:14px;color:#fff;font-weight:700;transform:scaleX(0.8940);transform-origin:0 0;">DELETE</div><div class="t" style="left:1821.04px;top:129px;font-size:12.4px;line-height:14px;color:#fff;font-weight:700;transform:scaleX(0.9508);transform-origin:0 0;">PUBLISH</div><div class="t" style="left:1089.05px;top:177px;font-size:12.3px;line-height:14px;color:#005fa7;transform:scaleX(0.9497);transform-origin:0 0;-webkit-text-stroke:0.45px #005fa7;">FRAMES</div><div class="t" style="left:1184.87px;top:177px;font-size:12.3px;line-height:14px;color:#737682;transform:scaleX(0.9626);transform-origin:0 0;-webkit-text-stroke:0.45px #737682;">STATISTICS</div><div class="t" style="left:1298.12px;top:177px;font-size:12.3px;line-height:14px;color:#737682;transform:scaleX(0.9818);transform-origin:0 0;-webkit-text-stroke:0.45px #737682;">METADATA</div><div class="t" style="left:1415.95px;top:177px;font-size:12.3px;line-height:14px;color:#737682;transform:scaleX(0.9567);transform-origin:0 0;-webkit-text-stroke:0.45px #737682;">INFO</div><div class="t" style="left:656.79px;top:234px;font-size:15px;line-height:17px;color:#6d7080;transform:scaleX(1.0046);transform-origin:0 0;">Filter by label</div><div class="t" style="left:952.43px;top:236px;font-size:14.6px;line-height:16px;color:#2a2e3f;transform:scaleX(0.9767);transform-origin:0 0;">15 out of 15 found</div><div class="t" style="left:1474.05px;top:236px;font-size:12.6px;line-height:14px;color:#005fa7;transform:scaleX(0.9166);transform-origin:0 0;-webkit-text-stroke:0.45px #005fa7;">CONTEXT</div><div class="t" style="left:649.68px;top:130px;font-size:11px;line-height:12px;color:#fff;font-weight:700;transform:scaleX(1.1675);transform-origin:0 0;">ID</div><div class="t" style="left:673.14px;top:131px;font-size:10.9px;line-height:12px;color:#2b2f3d;font-family:'Liberation Mono',monospace;transform:scaleX(1.0098);transform-origin:0 0;">5f43dd13</div><svg class="t" style="left:727px;top:136px" width="12" height="6" viewBox="727 136 12 6"><g fill="#2b2f3d"><circle cx="729.4" cy="139.3" r="0.8"/><circle cx="732.5" cy="139.3" r="0.8"/><circle cx="735.6" cy="139.3" r="0.8"/></g></svg><div class="t" style="left:773.03px;top:129px;font-size:11.2px;line-height:12px;color:#22263a;font-weight:700;transform:scaleX(0.8156);transform-origin:0 0;">DRAFT</div><div class="t" style="left:279.38px;top:26px;font-size:11px;line-height:12px;color:#fff;font-weight:700;transform:scaleX(1.1675);transform-origin:0 0;">ID</div>
</body></html>
